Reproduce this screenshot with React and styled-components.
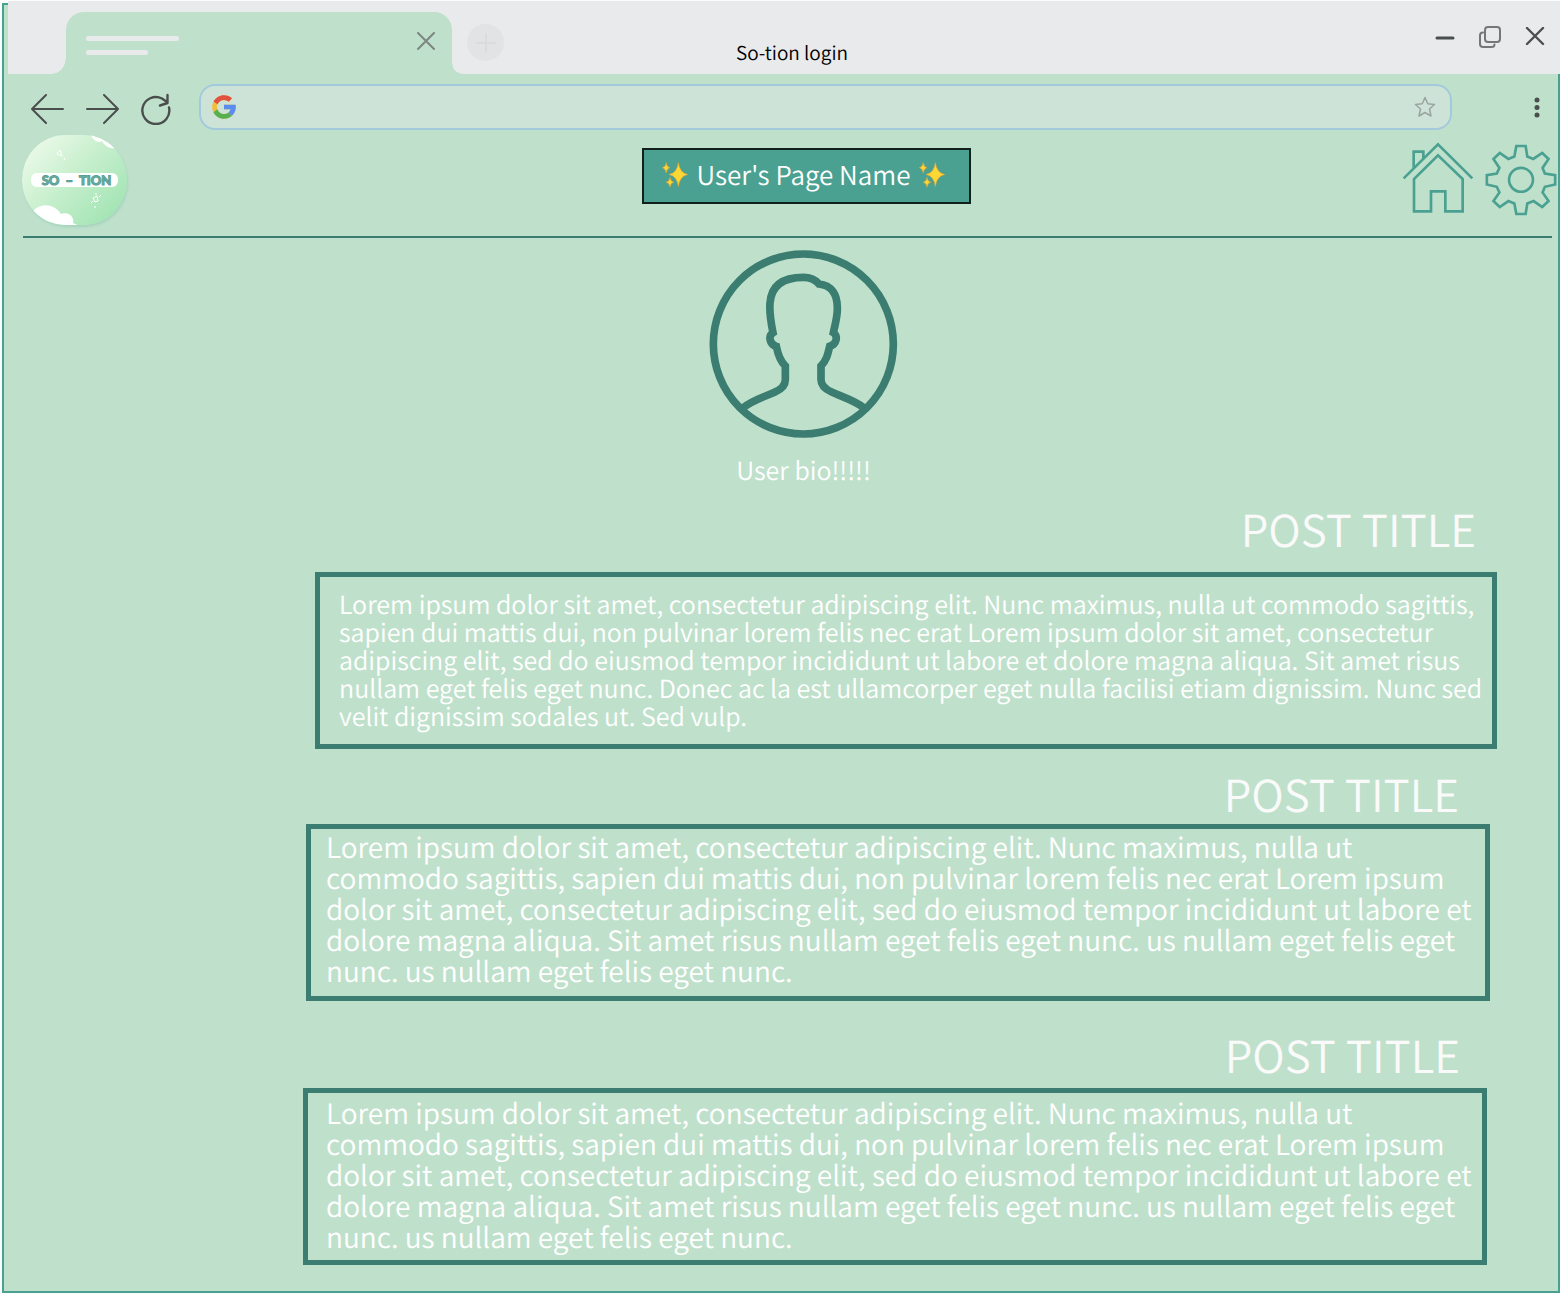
import React from "react";
import styled, { createGlobalStyle } from "styled-components";

const c = {
  mint: "#bfe1cc",
  strip: "#e8eaec",
  teal: "#4aa191",
  pine: "#3b7d70",
  ink: "#4a4f4d",
};

const Global = createGlobalStyle`
  *, *::before, *::after { box-sizing: border-box; }
  body {
    margin: 0;
    background: #fbfdfc;
    font-family: "Noto Sans CJK SC", "Noto Sans", sans-serif;
    font-weight: 350;
    text-rendering: geometricPrecision;
  }
  h1, h2, p { margin: 0; font-weight: inherit; }
`;

const Window = styled.div`
  margin: 3px 0 1px 2px;
  padding-bottom: 26px;
  border: 2px solid ${c.teal};
  background: ${c.mint};
`;

const IconButton = styled.button`
  display: flex;
  align-items: center;
  justify-content: center;
  flex: none;
  padding: 0;
  border: 0;
  background: none;
  cursor: pointer;
`;

/* Tab strip */
const Strip = styled.div`
  display: grid;
  grid-template-columns: 1fr auto 1fr;
  height: 73px;
  margin: -4px -2px 0 4px;
  background: ${c.strip};
`;

const Tabs = styled.div`
  display: flex;
  align-items: flex-end;
  padding-left: 58px;
`;

const Tab = styled.div`
  position: relative;
  display: flex;
  justify-content: space-between;
  width: 386px;
  height: 62px;
  padding: 20px 16px 0 20px;
  border-radius: 18px 18px 0 0;
  background: ${c.mint};

  &::before,
  &::after {
    content: "";
    position: absolute;
    bottom: 0;
    width: 14px;
    height: 16px;
  }
  &::before {
    right: 100%;
    background: radial-gradient(ellipse 14px 16px at 0 0, ${c.strip} 96%, ${c.mint} 100%);
  }
  &::after {
    left: 100%;
    width: 10px;
    height: 10px;
    background: radial-gradient(circle at 100% 0, ${c.strip} 9px, ${c.mint} 10px);
  }
`;

const TabLabel = styled.div`
  display: flex;
  flex-direction: column;
  gap: 9px;
  padding-top: 4px;
`;

const TabLine = styled.span`
  width: ${(p) => p.$width}px;
  height: 5px;
  border-radius: 2px;
  background: ${c.strip};
`;

const TabClose = styled(IconButton)`
  width: 20px;
  height: 20px;
`;

const NewTab = styled(IconButton)`
  width: 37px;
  height: 37px;
  margin: 0 0 13px 15px;
  border-radius: 50%;
  background: #e1e3e4;
`;

const WindowTitle = styled.span`
  padding: 39px 0 0 16px;
  font-size: 19px;
  line-height: 26px;
  color: #000;
`;

const Controls = styled.div`
  display: flex;
  justify-content: flex-end;
  align-items: center;
  gap: 24px;
  height: 71px;
  padding-right: 15px;
`;

/* Navigation */
const Toolbar = styled.nav`
  display: flex;
  align-items: center;
  height: 46px;
  margin-top: 10px;
  padding: 0 13px 0 26px;
`;

const NavButtons = styled.div`
  display: flex;
  align-items: center;
  gap: 20px;
  padding-top: 4px;
`;

const AddressBar = styled.label`
  display: flex;
  align-items: center;
  flex: 1;
  height: 46px;
  margin: 0 77px 0 27px;
  padding: 0 14px 0 10px;
  border: 2px solid #a3c9dc;
  border-radius: 16px;
  background: #cde3d7;
`;

const AddressInput = styled.input`
  flex: 1;
  min-width: 0;
  padding: 0 12px;
  border: 0;
  outline: 0;
  background: none;
  font: 20px "Noto Sans CJK SC", sans-serif;
  color: ${c.ink};
`;

/* Site header */
const Header = styled.header`
  display: grid;
  grid-template-columns: 1fr auto 1fr;
  align-items: center;
  height: 108px;
  margin: 0 6px 0 19px;
  padding-bottom: 7px;
  border-bottom: 2px solid ${c.pine};
`;

const Logo = styled.a`
  position: relative;
  display: flex;
  align-items: center;
  justify-content: center;
  width: 105px;
  height: 90px;
  margin-left: -1px;
  border-radius: 43px / 45px;
  overflow: hidden;
  background: linear-gradient(135deg, #e6f8e4 15%, #c4eecb 50%, #a2e4b3 90%);
  box-shadow: 1px 2px 3px #a5d3bc;
  text-decoration: none;
`;

const LogoArt = styled.svg`
  position: absolute;
  inset: 0;
`;

const LogoName = styled.span`
  position: relative;
  width: 87px;
  height: 14px;
  border-radius: 6px;
  background: #fff;
  padding-left: 4px;
  font: 900 13px/14px Lato, sans-serif;
  text-align: center;
  white-space: pre;
  color: #6fb0a6;
  -webkit-text-stroke: 1px #5a9f94;
`;

const Banner = styled.h1`
  display: flex;
  align-items: center;
  gap: 8px;
  height: 56px;
  margin: 0 0 8px 38px;
  padding: 0 24px 2px 18px;
  border: 2px solid #10201c;
  background: ${c.teal};
  font-size: 26px;
  line-height: 40px;
  color: #fff;
`;

const Actions = styled.div`
  display: flex;
  justify-content: flex-end;
  gap: 11px;
  margin-right: -5px;
`;

const Profile = styled.section`
  display: flex;
  flex-direction: column;
  align-items: center;
  padding: 11px 0 0 45px;
`;

const Bio = styled.p`
  margin-top: 13px;
  font-size: 25px;
  line-height: 36px;
  color: #fff;
`;

/* Posts */
const Post = styled.article`
  margin: ${(p) => p.$top}px ${(p) => p.$right}px 0 ${(p) => p.$left}px;
`;

const PostTitle = styled.h2`
  padding-right: ${(p) => p.$inset}px;
  margin-bottom: ${(p) => p.$gap}px;
  font-size: 44px;
  line-height: 48px;
  text-align: right;
  color: #fafafa;
`;

const PostBox = styled.div`
  min-height: 177px;
  padding: ${(p) => p.$pad};
  border: 5px solid ${c.pine};
`;

const PostText = styled.p`
  font-size: ${(p) => (p.$large ? 28 : 25)}px;
  line-height: ${(p) => (p.$large ? 31 : 28)}px;
  color: #fff;
`;

const Stroke = ({ w, h, box, width = 2, color = c.ink, children }) => (
  <svg width={w} height={h} viewBox={box || `0 0 ${w} ${h}`} fill="none" stroke={color}
    strokeWidth={width} strokeLinecap="round" strokeLinejoin="round" aria-hidden="true">
    {children}
  </svg>
);

const star = (x, y, rx, ry) =>
  `M${x} ${y - ry}Q${x + rx * 0.14} ${y - ry * 0.14} ${x + rx} ${y}Q${x + rx * 0.14} ${y + ry * 0.14} ${x} ${y + ry}Q${x - rx * 0.14} ${y + ry * 0.14} ${x - rx} ${y}Q${x - rx * 0.14} ${y - ry * 0.14} ${x} ${y - ry}Z`;

const Sparkles = () => (
  <svg width="26" height="26" viewBox="96 425 81 81" fill="#fdd835" stroke="#e8a43a" strokeWidth="2" aria-hidden="true">
    <path d={star(147, 464, 29, 37)} />
    <path d={star(109, 443, 12, 16)} />
    <path d={star(121, 488, 12, 15)} />
  </svg>
);

const GoogleMark = () => (
  <svg width="26" height="26" viewBox="2 2 44 44" aria-hidden="true">
    <path fill="#f4bd3a" d="M43.6 20.1H42V20H24v8h11.3C33.7 32.7 29.2 36 24 36c-6.6 0-12-5.4-12-12s5.4-12 12-12c3.1 0 5.8 1.2 8 3l5.7-5.7C34 6.1 29.3 4 24 4 13 4 4 13 4 24s9 20 20 20 20-9 20-20c0-1.3-.1-2.6-.4-3.9z" />
    <path fill="#e25241" d="M6.3 14.7l6.6 4.8C14.7 15.1 19 12 24 12c3.1 0 5.8 1.2 8 3l5.7-5.7C34 6.1 29.3 4 24 4 16.3 4 9.7 8.3 6.3 14.7z" />
    <path fill="#57b04f" d="M24 44c5.2 0 9.9-2 13.4-5.2l-6.2-5.2C29.2 35.1 26.7 36 24 36c-5.2 0-9.6-3.3-11.3-8l-6.5 5C9.5 39.6 16.2 44 24 44z" />
    <path fill="#5b8def" d="M43.6 20.1H42V20H24v8h11.3c-.8 2.2-2.2 4.2-4.1 5.6l6.2 5.2C37 39.2 44 34 44 24c0-1.3-.1-2.6-.4-3.9z" />
  </svg>
);

const House = () => (
  <svg width="72" height="72" viewBox="66 431 216 216" overflow="visible" fill="none" stroke={c.teal} strokeWidth="8" aria-hidden="true">
    <path d="M71 534L174 432L277 534M101 503V454H130V475" />
    <path d="M102 633V536L174 465L248 536V633H196V573H153V633Z" />
  </svg>
);

const Gear = () => (
  <svg width="72" height="72" viewBox="315 430 216 217" fill="none" stroke={c.teal} strokeWidth="8" aria-hidden="true">
    <path d="M409 436H437L442 468L460 475L487 457L506 475L488 502L495 519L526 524V552L495 559L488 576L506 602L487 620L461 602L442 609L437 641H409L403 609L385 602L359 620L340 602L358 576L350 559L320 552V524L350 519L358 502L340 475L359 457L385 475L403 468Z" />
    <circle cx="423" cy="538" r="36" />
  </svg>
);

const Avatar = () => (
  <svg width="190" height="190" viewBox="56 28 570 570" fill="none" stroke={c.pine} strokeWidth="23" role="img" aria-label="User avatar">
    <circle cx="339" cy="313" r="270" />
    <path d="M157 505C190 480 222 472 254 457C276 447 285 436 285 420V379C267 362 262 341 258 320C237 314 233 288 248 279C240 240 237 215 239 190C243 138 278 113 339 113C364 113 376 121 386 133C425 137 441 165 441 204C442 231 434 255 429 279C444 289 439 315 418 320C412 346 408 363 392 379V420C392 436 402 447 424 457C456 472 488 480 522 505" />
  </svg>
);

const small =
  "Lorem ipsum dolor sit amet, consectetur adipiscing elit. Nunc maximus, nulla ut commodo sagittis, sapien dui mattis dui, non pulvinar lorem felis nec erat Lorem ipsum dolor sit amet, consectetur adipiscing elit, sed do eiusmod tempor incididunt ut labore et dolore magna aliqua. Sit amet risus nullam eget felis eget nunc. Donec ac la est ullamcorper eget nulla facilisi etiam dignissim. Nunc sed velit dignissim sodales ut. Sed vulp.";
const large =
  "Lorem ipsum dolor sit amet, consectetur adipiscing elit. Nunc maximus, nulla ut commodo sagittis, sapien dui mattis dui, non pulvinar lorem felis nec erat Lorem ipsum dolor sit amet, consectetur adipiscing elit, sed do eiusmod tempor incididunt ut labore et dolore magna aliqua. Sit amet risus nullam eget felis eget nunc. us nullam eget felis eget nunc. us nullam eget felis eget nunc.";

const posts = [
  { id: 1, text: small, isLarge: false, top: 16, left: 311, right: 61, inset: 21, gap: 20, pad: "13px 0 0 19px" },
  { id: 2, text: large, isLarge: true, top: 20, left: 302, right: 68, inset: 31, gap: 7, pad: "3px 0 0 15px" },
  { id: 3, text: large, isLarge: true, top: 29, left: 299, right: 71, inset: 27, gap: 10, pad: "5px 0 0 18px" },
];

export default function App() {
  return (
    <>
      <Global />
      <Window>
        <Strip>
          <Tabs>
            <Tab>
              <TabLabel>
                <TabLine $width={93} />
                <TabLine $width={62} />
              </TabLabel>
              <TabClose aria-label="Close tab">
                <Stroke w={20} h={20} color="#7d8682"><path d="M2 1L18 17M18 1L2 17" /></Stroke>
              </TabClose>
            </Tab>
            <NewTab aria-label="New tab">
              <Stroke w={20} h={20} color="#d9dbdc"><path d="M10 1V19M1 10H19" /></Stroke>
            </NewTab>
          </Tabs>
          <WindowTitle>So-tion login</WindowTitle>
          <Controls>
            <IconButton aria-label="Minimize"><Stroke w={20} h={22} width={3}><path d="M2 12H18" /></Stroke></IconButton>
            <IconButton aria-label="Restore">
              <Stroke w={22} h={22} color="#737775">
                <rect x="6" y="1" width="15" height="15" rx="3" />
                <path d="M4 6.500Q1 6.500 1 9.500V18Q1 21 4 21H12.500Q15.500 21 15.500 18.500" />
              </Stroke>
            </IconButton>
            <IconButton aria-label="Close window"><Stroke w={20} h={20} width={2.4}><path d="M2 1L18 17M18 1L2 17" /></Stroke></IconButton>
          </Controls>
        </Strip>

        <Toolbar aria-label="Browser">
          <NavButtons>
            <IconButton aria-label="Back"><Stroke w={35} h={30}><path d="M33 15H2M16 1L2 15L16 29" /></Stroke></IconButton>
            <IconButton aria-label="Forward"><Stroke w={35} h={30}><path d="M2 15H33M19 1L33 15L19 29" /></Stroke></IconButton>
            <IconButton aria-label="Reload">
              <Stroke w={32} h={32} width={2.4}><path d="M29 14.500A13.500 13.500 0 1 1 22 5.500L27 9M27.500 2V10L20 12.500" /></Stroke>
            </IconButton>
          </NavButtons>
          <AddressBar>
            <GoogleMark />
            <AddressInput type="text" aria-label="Address" />
            <Stroke w={22} h={22} width={1.5} color="#9aa5a0">
              <path d="M11 1.500L13.800 7.800L20.500 8.500L15.500 13L17 20L11 16.500L5 20L6.500 13L1.500 8.500L8.200 7.800Z" />
            </Stroke>
          </AddressBar>
          <IconButton aria-label="Menu">
            <svg width="16" height="22" viewBox="0 0 16 22" fill={c.ink} aria-hidden="true">
              <circle cx="8" cy="4" r="2.500" /><circle cx="8" cy="11.500" r="2.500" /><circle cx="8" cy="19" r="2.500" />
            </svg>
          </IconButton>
        </Toolbar>

        <Header>
          <Logo href="#">
            <LogoArt width="105" height="90" viewBox="0 0 105 90" aria-hidden="true">
              <path fill="#fff" d="M8 82C14 66 32 68 39 79C46 76 53 82 51 88L60 92H8ZM69 0C72 7 77 8 80 6C84 13 90 14 95 13V0Z" />
              <g fill="none" stroke="#fff" strokeWidth="1">
                <path d="M35 18L38 15L40 21L35 19ZM42 23L43 25M71 63L75 61L76 66L73 67ZM74 58V60M79 60L77 62M69 68L71 66M73 71V73" />
              </g>
            </LogoArt>
            <LogoName>{"SO  –  TION"}</LogoName>
          </Logo>
          <Banner>
            <Sparkles />
            User's Page Name
            <Sparkles />
          </Banner>
          <Actions>
            <IconButton aria-label="Home"><House /></IconButton>
            <IconButton aria-label="Settings"><Gear /></IconButton>
          </Actions>
        </Header>

        <main>
          <Profile>
            <Avatar />
            <Bio>User bio!!!!!</Bio>
          </Profile>
          {posts.map((p) => (
            <Post key={p.id} $top={p.top} $left={p.left} $right={p.right}>
              <PostTitle $inset={p.inset} $gap={p.gap}>POST TITLE</PostTitle>
              <PostBox $pad={p.pad}>
                <PostText $large={p.isLarge}>{p.text}</PostText>
              </PostBox>
            </Post>
          ))}
        </main>
      </Window>
    </>
  );
}
